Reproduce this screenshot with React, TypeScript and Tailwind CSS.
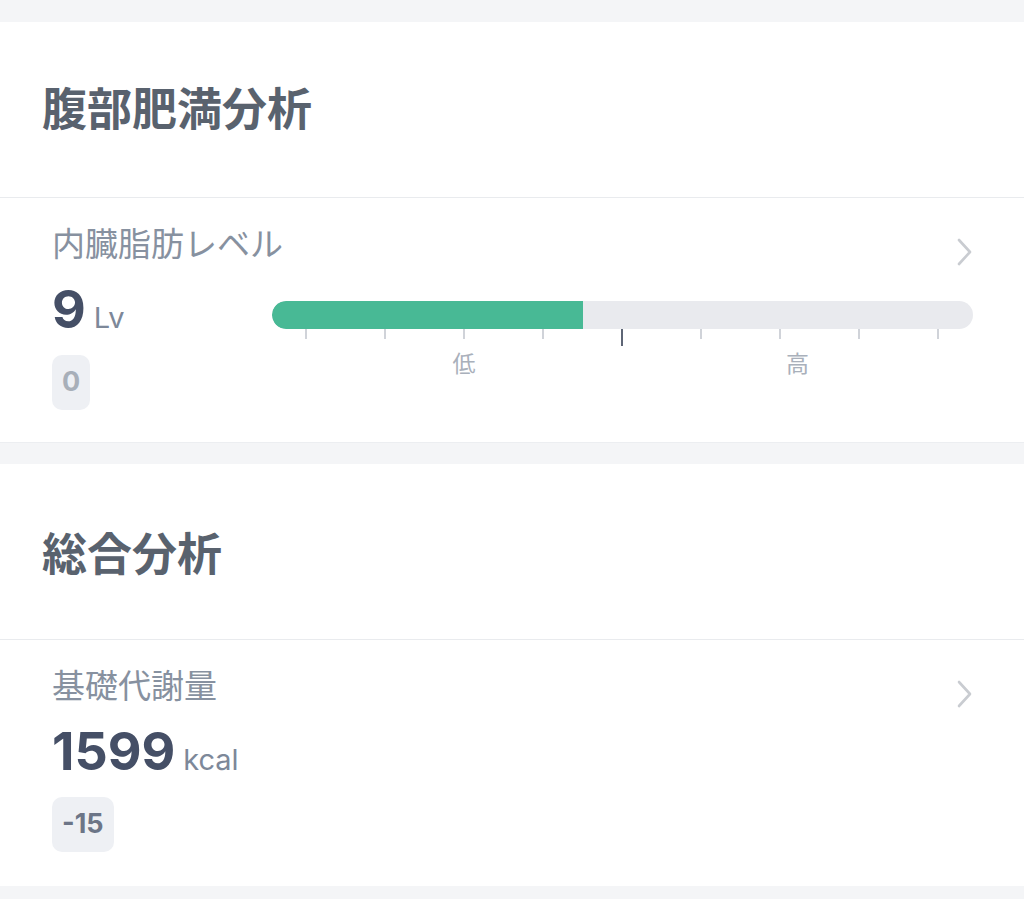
const font = { fontFamily: 'Inter, "Noto Sans CJK JP", sans-serif' };

function Chevron() {
  return (
    <svg className="mt-[13px]" width="18" height="30" viewBox="0 0 18 30" fill="none">
      <path d="M4 3 L15 15 L4 27" stroke="#c9ccd1" strokeWidth="2.6" strokeLinecap="round" strokeLinejoin="round" />
    </svg>
  );
}

function SectionHeader({ title, offset }: { title: string; offset: string }) {
  return (
    <div className={`h-[176px] bg-white flex items-center px-[42px] border-b border-[#e9ebee] ${offset}`}>
      <h2 className="text-[45px] font-bold text-[#59626e] leading-none">{title}</h2>
    </div>
  );
}

function Scale() {
  const ticks = [0, 1, 2, 3, 4, 5, 6, 7, 8];
  return (
    <div className="flex-1 mt-[17px]">
      <div className="h-[28px] rounded-full bg-[#e9eaee] overflow-hidden">
        <div className="h-full w-[311px] bg-[#48b995] rounded-l-full" />
      </div>
      <div className="flex justify-between ml-[33px] mr-[34px] items-start h-[17px]">
        {ticks.map((t) =>
          t === 4 ? (
            <div key={t} className="w-[2px] h-[17px] bg-[#5e6676]" />
          ) : (
            <div key={t} className="w-[2px] h-[10px] bg-[#d0d3d9]" />
          )
        )}
      </div>
      <div className="flex ml-[34px] mt-[3px] text-[23px] leading-[30px] text-[#a9b0bb]">
        <div className="w-[316px] text-center">低</div>
        <div className="w-[351px] text-center">高</div>
      </div>
    </div>
  );
}

function Badge({ value, muted }: { value: string; muted?: boolean }) {
  return (
    <div
      className={`mt-[21px] h-[55px] px-[10px] rounded-[10px] bg-[#eef0f4] inline-flex items-center text-[27px] font-bold ${
        muted ? 'text-[#a8afb9]' : 'text-[#6c7587]'
      }`}
    >
      {value}
    </div>
  );
}

function MetricCard({
  label,
  value,
  unit,
  badge,
  muted,
  withScale,
  bottom,
}: {
  label: string;
  value: string;
  unit: string;
  badge: string;
  muted?: boolean;
  withScale?: boolean;
  bottom: string;
}) {
  return (
    <div className={`bg-white pl-[52px] pr-[51px] pt-[26px] ${bottom}`}>
      <div className="flex items-start justify-between h-[40px]">
        <span className="text-[33px] text-[#8791a0] leading-[40px]">{label}</span>
        <Chevron />
      </div>
      <div className="flex mt-[20px]">
        <div className="w-[220px] flex flex-col items-start">
          <div className="flex items-baseline h-[50px]">
            <span className="text-[52px] font-bold text-[#454f66] leading-none">{value}</span>
            <span className="text-[29px] text-[#7d8899] ml-[8px] leading-none">{unit}</span>
          </div>
          <Badge value={badge} muted={muted} />
        </div>
        {withScale && <Scale />}
      </div>
    </div>
  );
}

export default function App() {
  return (
    <div className="w-[1024px] h-[899px] bg-[#f4f5f7] overflow-hidden" style={font}>
      <div className="h-[22px]" />
      <SectionHeader title="腹部肥満分析" offset="pt-[0px]" />
      <MetricCard label="内臓脂肪レベル" value="9" unit="Lv" badge="0" muted withScale bottom="pb-[32px]" />
      <div className="h-[22px] border-t border-[#eceef1]" />
      <SectionHeader title="総合分析" offset="pt-[6px]" />
      <MetricCard label="基礎代謝量" value="1599" unit="kcal" badge="-15" bottom="pb-[34px]" />
    </div>
  );
}
